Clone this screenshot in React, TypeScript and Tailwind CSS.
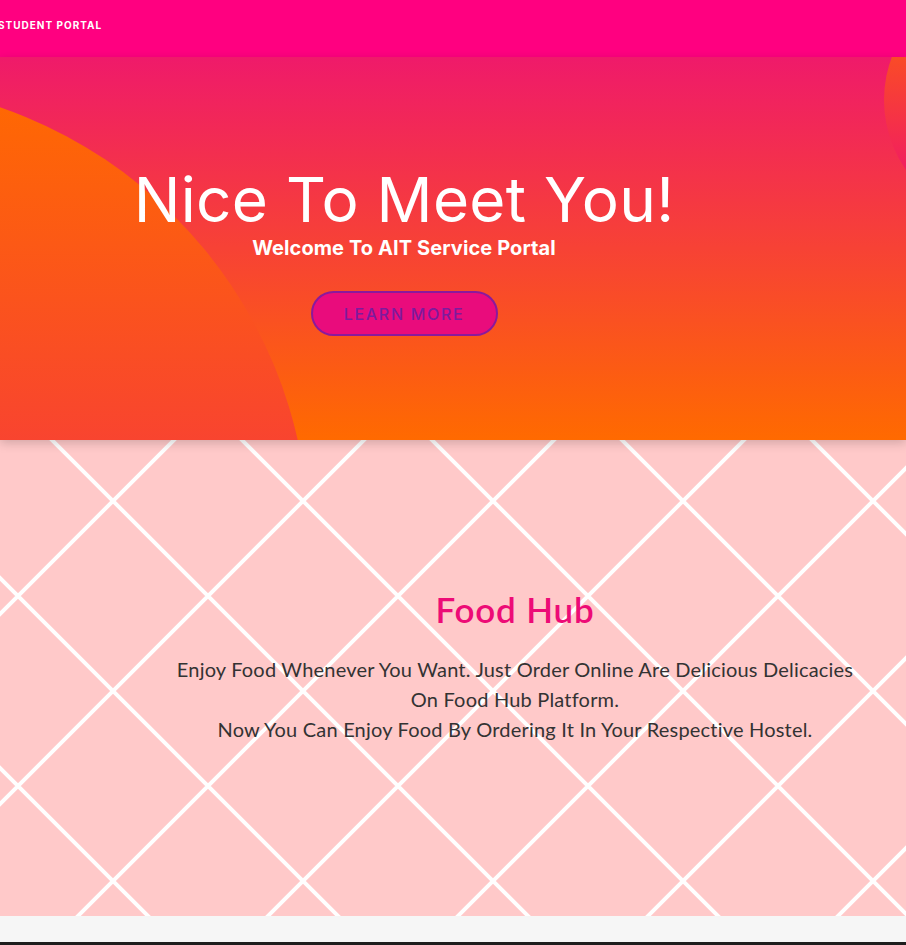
import React from "react";

function Lattice() {
  return (
    <svg className="absolute inset-0 h-full w-full" aria-hidden="true">
      <defs>
        <pattern id="lattice" x="113" y="61" width="190" height="190" patternUnits="userSpaceOnUse">
          <path
            d="M-20 -20 L210 210 M210 -20 L-20 210 M180 -10 L200 10 M-10 180 L10 200 M-10 10 L10 -10 M180 200 L200 180"
            stroke="#ffffff"
            strokeWidth="4"
            fill="none"
          />
        </pattern>
      </defs>
      <rect width="100%" height="100%" fill="url(#lattice)" />
    </svg>
  );
}

export default function App() {
  return (
    <div className="w-full min-h-screen bg-[#f6f6f6]">
      {/* Nav */}
      <nav className="h-[57px] bg-[#ff0080] pt-[19px]">
        <span className="-ml-[2px] block text-[10px] font-bold leading-[12px] tracking-[1px] text-white [font-family:Inter,'Liberation_Sans',sans-serif]">
          STUDENT PORTAL
        </span>
      </nav>

      {/* Hero */}
      <section className="relative z-10 h-[383px] overflow-hidden bg-[linear-gradient(to_bottom,#ef1a6a,#ff6a00)] shadow-[0_3px_10px_rgba(0,0,0,0.18)]">
        <div className="absolute left-[-609px] top-[25px] h-[918px] w-[918px] rounded-full bg-[linear-gradient(to_bottom,#ff6a00,#ee0979)]" />
        <div className="absolute left-[884px] top-[-79px] h-[244px] w-[244px] rounded-full bg-[linear-gradient(to_bottom,#ff6a00,#ee0979)]" />
        <div className="relative flex w-[808px] flex-col items-center pt-[112px] [font-family:Inter,'Liberation_Sans',sans-serif]">
          <h1 className="text-[62px] font-normal leading-none tracking-[0.3px] text-white">Nice To Meet You!</h1>
          <p className="mt-[7px] text-[20px] font-bold leading-none tracking-[0.1px] text-white">
            Welcome To AIT Service Portal
          </p>
          <button className="mt-[33px] flex h-[45px] w-[187px] items-center justify-center rounded-full border-2 border-[#8a1a9c] bg-[#e90c7c] text-[16px] font-medium tracking-[1.7px] text-[#7d1a9e]">
            LEARN MORE
          </button>
        </div>
      </section>

      {/* Food Hub */}
      <section className="relative h-[476px] overflow-hidden bg-[#ffc9c9]">
        <Lattice />
        <div className="relative flex flex-col items-center pl-[124px] pt-[152px] [font-family:Lato,'Open_Sans',sans-serif]">
          <h2 className="text-[35px] font-semibold leading-none tracking-[0.8px] text-[#ed0b76]">Food Hub</h2>
          <div className="mt-[27px] flex flex-col items-center text-[20px] leading-[30px] tracking-[0.2px] text-[#333333]">
            <span>Enjoy Food Whenever You Want. Just Order Online Are Delicious Delicacies</span>
            <span>On Food Hub Platform.</span>
            <span>Now You Can Enjoy Food By Ordering It In Your Respective Hostel.</span>
          </div>
        </div>
      </section>

      <div className="h-[26px] bg-[#f6f6f6]" />
      <div className="h-[40px] bg-[#1e1e1e]" />
    </div>
  );
}
